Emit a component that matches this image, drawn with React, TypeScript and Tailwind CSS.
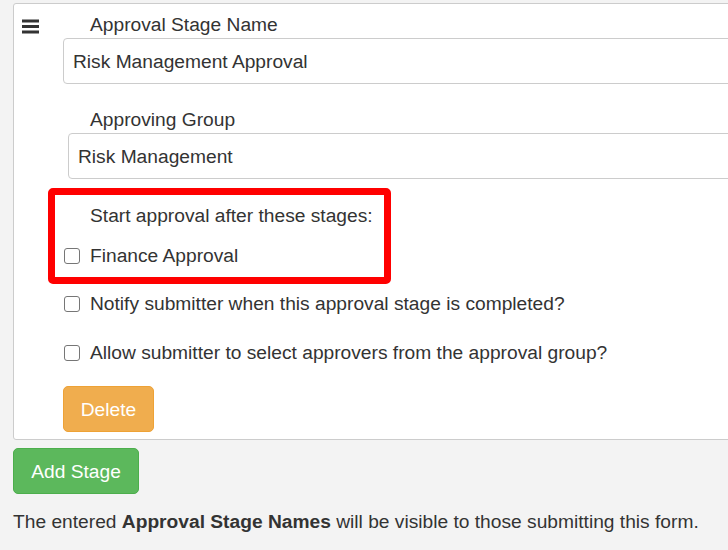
const font = "font-['Liberation_Sans',Arial,sans-serif]";

const Checkbox = () => (
    <span className="w-[16px] h-[16px] shrink-0 rounded-[3px] border border-[#767676] bg-white" />
);

const CheckRow = ({ label }: { label: string }) => (
    <div className="flex items-center h-[27px]">
        <div className="w-[27px] flex pl-px">
            <Checkbox />
        </div>
        <span>{label}</span>
    </div>
);

const Hamburger = () => (
    <svg width="17" height="15" viewBox="0 0 17 15" className="text-[#333]">
        <rect x="0" y="0.5" width="17" height="3" fill="currentColor" />
        <rect x="0" y="6" width="17" height="3" fill="currentColor" />
        <rect x="0" y="11.5" width="17" height="3" fill="currentColor" />
    </svg>
);

const App = () => {
    return (
        <div className={`w-[728px] h-[550px] overflow-hidden bg-[#f3f3f3] text-[#333] text-[19.2px] leading-[27px] ${font}`}>
            {/* STAGE PANEL */}
            <div className="ml-[13px] mt-[3px] w-[760px] bg-white border border-[#cccccc] rounded-[3px] flex pt-[7px] pb-[7px]">
                <div className="w-[49px] pl-[8px] pt-[8px]">
                    <Hamburger />
                </div>
                <div className="flex-1 flex flex-col">
                    <label className="pl-[27px]">Approval Stage Name</label>
                    <div className="h-[46px] border border-[#cccccc] rounded-[4px] flex items-center px-[9px]">
                        Risk Management Approval
                    </div>
                    <label className="pl-[27px] mt-[22px]">Approving Group</label>
                    <div className="ml-[5px] h-[46px] border border-[#cccccc] rounded-[4px] flex items-center px-[9px]">
                        Risk Management
                    </div>
                    {/* highlighted */}
                    <div className="-ml-[15px] mt-[9px] w-[343px] border-[7px] border-[#ff0000] rounded-[5px] pt-[7px] pb-[8px] pl-[8px]">
                        <div className="pl-[27px]">Start approval after these stages:</div>
                        <div className="mt-[13px]">
                            <CheckRow label="Finance Approval" />
                        </div>
                    </div>
                    <div className="mt-[6px]">
                        <CheckRow label="Notify submitter when this approval stage is completed?" />
                    </div>
                    <div className="mt-[22px]">
                        <CheckRow label="Allow submitter to select approvers from the approval group?" />
                    </div>
                    <div className="mt-[20px]">
                        <button className="h-[46px] w-[91px] rounded-[5px] bg-[#f0ad4e] border border-[#eea236] text-white">
                            Delete
                        </button>
                    </div>
                </div>
            </div>
            <button className="ml-[13px] mt-[8px] h-[46px] w-[126px] rounded-[5px] bg-[#5cb85c] border border-[#4cae4c] text-white">
                Add Stage
            </button>
            <p className="ml-[13px] mt-[14px]">
                The entered <b>Approval Stage Names</b> will be visible to those submitting this form.
            </p>
        </div>
    );
};

export default App;
